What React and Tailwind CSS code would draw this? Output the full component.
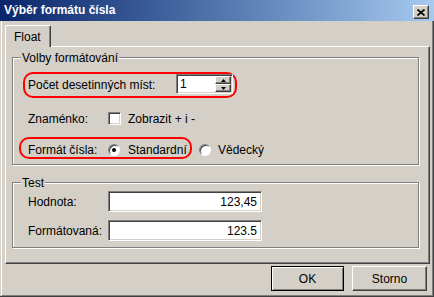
import React from 'react';

const raised =
  'border border-t-white border-l-white border-r-[#404040] border-b-[#404040] shadow-[inset_-1px_-1px_0_#808080]';
const sunken =
  'border border-t-[#808080] border-l-[#808080] border-r-white border-b-white shadow-[inset_1px_1px_0_#404040,inset_-1px_-1px_0_#d4d0c8]';

const GroupBox = ({ title, className, children }) => (
  <div
    className={`relative border border-[#808080] shadow-[inset_1px_1px_0_#fff,1px_1px_0_#fff] ${className}`}
  >
    <span className="absolute left-[8px] top-[-7px] bg-[#d4d0c8] px-[1px] leading-[14px]">
      {title}
    </span>
    {children}
  </div>
);

const Arrow = ({ up }) => (
  <svg width="5" height="3" viewBox="0 0 5 3">
    <path d={up ? 'M2.5 0 L5 3 L0 3 Z' : 'M0 0 L5 0 L2.5 3 Z'} fill="#000" />
  </svg>
);

const Radio = ({ checked }) => (
  <div className="w-[12px] h-[12px] rounded-full border border-t-[#808080] border-l-[#808080] border-r-white border-b-white bg-white flex items-center justify-center shadow-[inset_1px_1px_0_#404040]">
    {checked && <div className="w-[4px] h-[4px] rounded-full bg-black" />}
  </div>
);

const TextField = ({ value }) => (
  <div
    className={`w-[154px] h-[21px] bg-white ${sunken} flex items-center justify-end pr-[4px] leading-[14px]`}
  >
    {value}
  </div>
);

export default function App() {
  return (
    <div className="w-[434px] h-[297px] bg-[#d4d0c8] flex flex-col overflow-hidden font-['Liberation_Sans',Arial,sans-serif] text-[12px] text-black">
      {/* Title bar */}
      <div className="h-[21px] flex items-start justify-between bg-gradient-to-r from-[#0a246a] to-[#a6caf0]">
        <span className="pl-[4px] leading-[21px] font-bold text-white">Výběr formátu čísla</span>
        <button
          className={`mt-[5px] mr-[5px] w-[16px] h-[14px] bg-[#d4d0c8] ${raised} flex items-center justify-center`}
        >
          <svg width="8" height="7" viewBox="0 0 8 7">
            <path d="M0.5 0.5 L7.5 6.5 M7.5 0.5 L0.5 6.5" stroke="#000" strokeWidth="1.6" />
          </svg>
        </button>
      </div>

      {/* Window body */}
      <div className="flex-1 border-r border-b border-[#404040]">
        <div className="h-full border-l border-l-white border-r border-r-[#808080] border-b border-b-[#808080] ml-[1px] flex flex-col">
          {/* Tabs */}
          <div className="pl-[3px] pt-[4px] flex">
            <div className="relative z-10 -mb-[1px] h-[22px] w-[46px] bg-[#d4d0c8] border-t border-l border-t-white border-l-white border-r border-r-[#404040] rounded-t-[2px] shadow-[inset_-1px_0_0_#808080] flex items-center pl-[8px] leading-[14px]">
              Float
            </div>
          </div>

          {/* Tab panel */}
          <div className="ml-[3px] w-[425px] h-[218px] border-t border-l border-t-white border-l-white border-r border-b border-r-[#404040] border-b-[#404040] shadow-[inset_-1px_-1px_0_#808080] pl-[6px] pt-[10px]">
            <GroupBox title="Volby formátování" className="w-[407px] h-[108px]">
              <div className="flex flex-col pt-[14px]">
                {/* Decimal places */}
                <div className="ml-[10px] w-[214px] h-[26px] border-2 border-[#ff0000] rounded-[10px] flex items-start pl-[3px]">
                  <span className="w-[148px] leading-[14px] mt-[4px]">Počet desetinných míst:</span>
                  <div className={`w-[57px] h-[20px] bg-white ${sunken} flex`}>
                    <span className="flex-1 pl-[3px] leading-[18px]">1</span>
                    <div className="w-[16px] flex flex-col my-[1px] mr-[1px]">
                      <div className={`h-[8px] bg-[#d4d0c8] ${raised} flex items-center justify-center`}>
                        <Arrow up />
                      </div>
                      <div className={`h-[8px] bg-[#d4d0c8] ${raised} flex items-center justify-center`}>
                        <Arrow />
                      </div>
                    </div>
                  </div>
                </div>

                {/* Sign */}
                <div className="mt-[14px] ml-[15px] h-[13px] flex items-center">
                  <span className="w-[80px] leading-[14px]">Znaménko:</span>
                  <div className={`w-[13px] h-[13px] bg-white ${sunken}`} />
                  <span className="ml-[7px] leading-[14px]">Zobrazit + i -</span>
                </div>

                {/* Number format */}
                <div className="mt-[12px] flex items-center">
                  <div className="ml-[6px] w-[173px] h-[22px] border-2 border-[#ff0000] rounded-[10px] flex items-center pl-[7px] pt-[3px]">
                    <span className="w-[80px] leading-[14px]">Formát čísla:</span>
                    <Radio checked />
                    <span className="ml-[8px] leading-[14px]">Standardní</span>
                  </div>
                  <div className="ml-[7px] pt-[3px] flex items-center">
                    <Radio />
                    <span className="ml-[7px] leading-[14px]">Vědecký</span>
                  </div>
                </div>
              </div>
            </GroupBox>

            <GroupBox title="Test" className="mt-[17px] w-[407px] h-[66px]">
              <div className="flex flex-col gap-[8px] pt-[8px] pl-[15px]">
                <div className="flex items-center">
                  <span className="w-[80px] leading-[14px]">Hodnota:</span>
                  <TextField value="123,45" />
                </div>
                <div className="flex items-center">
                  <span className="w-[80px] leading-[14px]">Formátovaná:</span>
                  <TextField value="123.5" />
                </div>
              </div>
            </GroupBox>
          </div>

          {/* Buttons */}
          <div className="mt-[2px] flex justify-end gap-[8px] pr-[5px]">
            <button className="w-[73px] h-[25px] bg-[#d4d0c8] border border-black shadow-[inset_1px_1px_0_#fff,inset_-1px_-1px_0_#808080] leading-[14px]">
              OK
            </button>
            <button className={`w-[75px] h-[25px] bg-[#d4d0c8] ${raised} leading-[14px]`}>
              Storno
            </button>
          </div>
        </div>
      </div>
    </div>
  );
}
